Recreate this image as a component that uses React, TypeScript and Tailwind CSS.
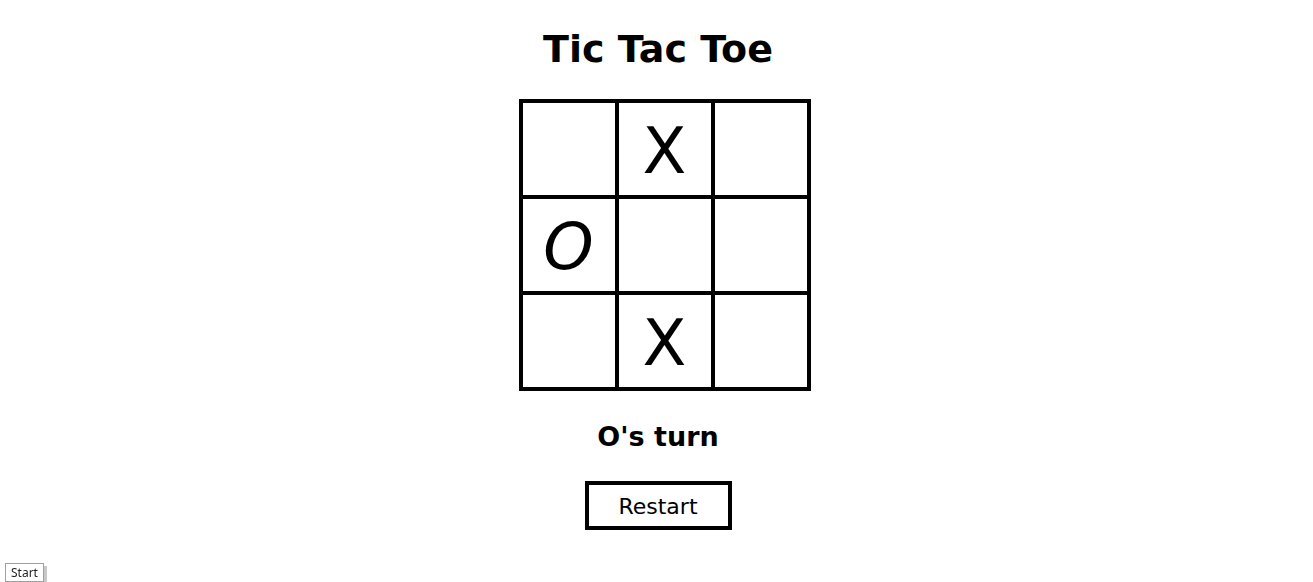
import React, { useState } from "react";

type Cell = "X" | "O" | null;

const comic = "font-['Comic_Sans_MS','DejaVu_Sans',sans-serif]";

const App: React.FC = () => {
  const [board, setBoard] = useState<Cell[]>([
    null, "X", null,
    "O", null, null,
    null, "X", null,
  ]);
  const [turn, setTurn] = useState<"X" | "O">("O");

  const play = (i: number) => {
    if (board[i]) return;
    const next = [...board];
    next[i] = turn;
    setBoard(next);
    setTurn(turn === "X" ? "O" : "X");
  };

  const restart = () => {
    setBoard(Array(9).fill(null));
    setTurn("X");
  };

  return (
    <div className={`min-h-[582px] bg-white text-black ${comic}`}>
      <div className="flex flex-col items-center pl-[3px]">
        <h1 className="mt-[27px] text-[38px] font-bold leading-[44px]">
          Tic Tac Toe
        </h1>

        {/* Board */}
        <div className="ml-[13px] mt-[28px] grid grid-cols-[repeat(3,92px)] grid-rows-[repeat(3,92px)] gap-[4px] bg-black p-[4px]">
          {board.map((cell, i) => (
            <button
              key={i}
              onClick={() => play(i)}
              className="flex items-center justify-center bg-white pt-[3px] text-[64px] leading-none"
            >
              <span className={cell === "O" ? "italic" : ""}>{cell}</span>
            </button>
          ))}
        </div>

        <p className="mt-[30px] text-[27px] font-bold leading-[32px]">
          {turn}'s turn
        </p>

        <button
          onClick={restart}
          className="mt-[28px] h-[49px] w-[147px] border-[4px] border-black bg-white pt-[2px] text-[22px]"
        >
          Restart
        </button>
      </div>

      {/* tooltip left over at the bottom */}
      <div className="fixed bottom-0 left-[5px] h-[19px] border border-[#a0a0a0] bg-white px-[5px] font-['Noto_Sans',sans-serif] text-[12px] leading-[17px] text-[#222] shadow-[3px_3px_0_#c8c8c8]">
        Start
      </div>
    </div>
  );
};

export default App;
